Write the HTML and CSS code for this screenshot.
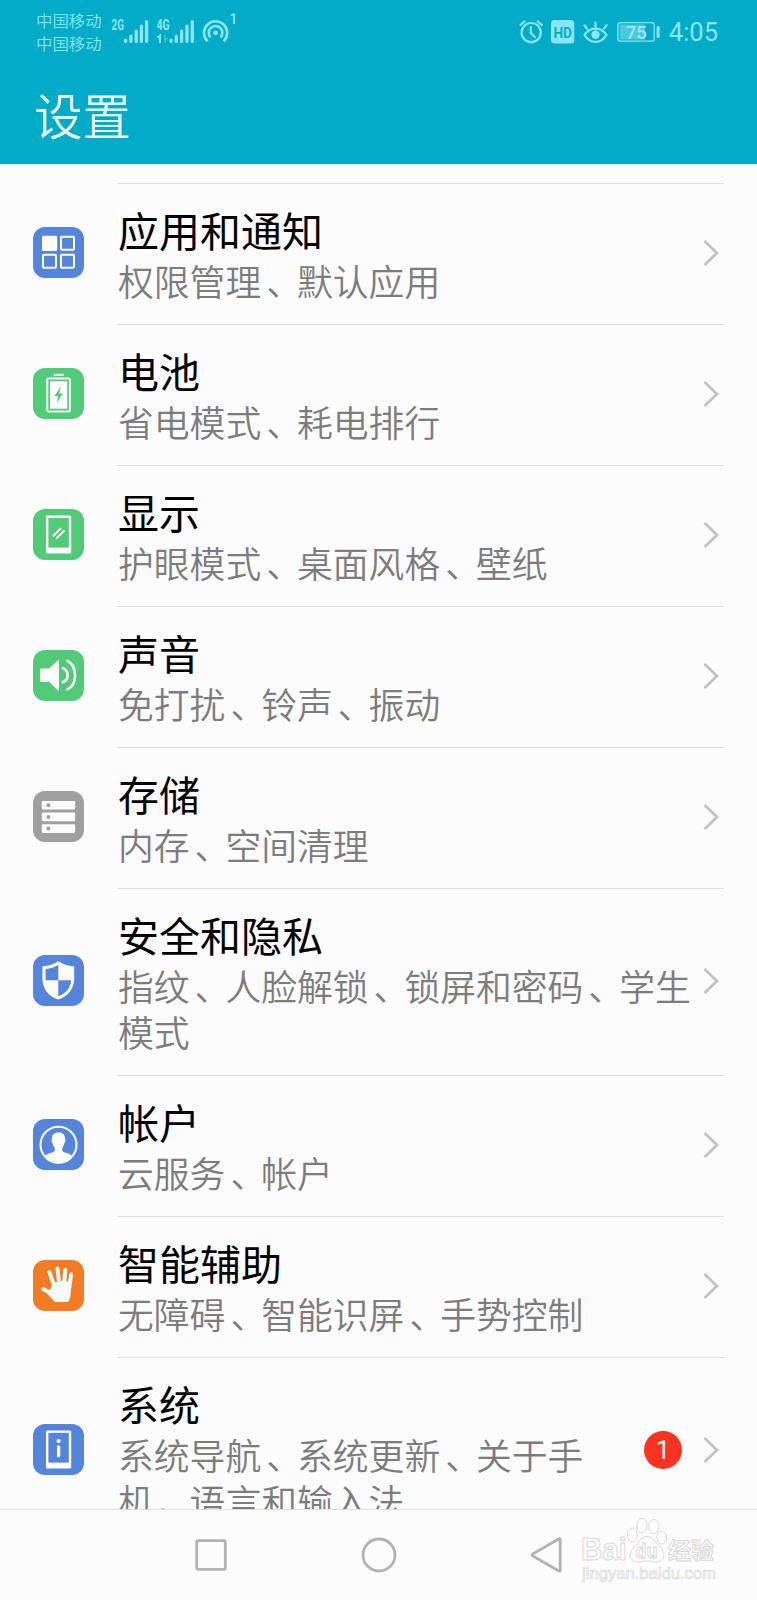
FILE: index.html
```
<!DOCTYPE html>
<html lang="zh-CN">
<head>
    <meta charset="UTF-8">
    <meta name="viewport" content="width=device-width, initial-scale=1.0">
    <title>设置</title>
    <link rel="stylesheet" href="styles.css">
</head>
<body>
    <div class="phone">
        <header class="header">
            <!-- Status bar -->
            <div class="status-bar">
                <div class="carriers">
                    <span>中国移动</span>
                    <span>中国移动</span>
                </div>
                <svg class="signals" width="130" height="60" viewBox="110 0 130 60">
                    <g class="signal-label">
                        <text x="111.5" y="30" textLength="12.5" lengthAdjust="spacingAndGlyphs">2G</text>
                        <text x="156.5" y="30" textLength="13" lengthAdjust="spacingAndGlyphs">4G</text>
                    </g>
                    <g class="line" stroke-width="3.2" stroke-linecap="round">
                        <path d="M125.6 40v1.4M130.9 36v5.4M136.2 31v10.4M141.4 26v15.4M146.6 21.5v19.9"/>
                        <path d="M171 40v1.4M176.3 36v5.4M181.6 31v10.4M187 26v15.4M192.3 21.5v19.9"/>
                    </g>
                    <path class="line" stroke-width="2" d="M157.5 37.5l2.5-2v7.5"/>
                    <path class="line faint" stroke-width="1.5" d="M165 35v8M165 40l2.5-2"/>
                    <g class="line" stroke-width="2.6">
                        <path d="M207.6 41.3a11.6 11.6 0 1 1 16 0"/>
                        <path d="M210.6 37.4a6.8 6.8 0 1 1 10 0"/>
                    </g>
                    <circle class="fill" cx="215.6" cy="32.8" r="2.4"/>
                    <text class="hotspot-count" x="229.5" y="23.5">1</text>
                </svg>
                <div class="status-right">
                    <svg width="24" height="60" viewBox="519 0 24 60">
                        <g class="line" stroke-width="2.2" stroke-linecap="round">
                            <circle cx="531.2" cy="32.6" r="9.6"/>
                            <path d="M530.8 27v6l4 4M520.5 25l4-3.5M541.8 25l-4-3.5"/>
                        </g>
                    </svg>
                    <svg width="24" height="60" viewBox="551 0 24 60">
                        <rect class="fill" x="551" y="20" width="23.3" height="23.5" rx="3.5"/>
                        <text class="hd" x="553.4" y="37.6" textLength="18.5" lengthAdjust="spacingAndGlyphs">HD</text>
                    </svg>
                    <svg width="26" height="60" viewBox="583 0 26 60">
                        <g class="line" stroke-width="2.2" stroke-linecap="round">
                            <path d="M584.5 35C590 26.4 601 26.4 606.5 35C601 44.2 590 44.2 584.5 35z"/>
                            <path d="M595.5 27v-4.5M587 28.5l-2.6-3.2M604 28.5l2.6-3.2"/>
                        </g>
                        <circle class="fill" cx="595.5" cy="34.8" r="4.2"/>
                    </svg>
                    <svg width="43" height="60" viewBox="619 0 43 60">
                        <rect class="line" stroke-width="1.3" x="619.8" y="22.6" width="36.4" height="18.6" rx="2.5"/>
                        <rect class="level" x="621.5" y="24.5" width="25.5" height="15"/>
                        <rect class="fill" x="658.6" y="26" width="3" height="12" rx="1"/>
                        <text class="battery-text" x="638.2" y="38.6" text-anchor="middle">75</text>
                    </svg>
                    <span class="clock">4:05</span>
                </div>
            </div>
            <h1>设置</h1>
        </header>

        <main class="list">
            <div class="item">
                <svg class="icon blue" viewBox="0 0 51 51">
                    <rect class="w" x="9" y="8.8" width="15.2" height="15.2" rx="1.2"/>
                    <g class="ws">
                        <rect x="28" y="9.8" width="13" height="13" rx="0.8"/>
                        <rect x="10" y="27.8" width="13" height="13" rx="0.8"/>
                        <rect x="28" y="27.8" width="13" height="13" rx="0.8"/>
                    </g>
                </svg>
                <div class="body">
                    <div class="text">
                        <h2>应用和通知</h2>
                        <p>权限管理<i>、</i>默认应用</p>
                    </div>
                    <svg class="arrow" viewBox="0 0 16 28"><path d="M1.5 2L14 14L1.5 26"/></svg>
                </div>
            </div>

            <div class="item">
                <svg class="icon green" viewBox="0 0 51 51">
                    <rect class="w" x="20.7" y="5.8" width="10" height="2"/>
                    <rect class="ws" x="14.3" y="10.5" width="22.6" height="33" rx="1.2"/>
                    <rect class="w" x="17" y="13.3" width="17.2" height="27.4"/>
                    <path class="c" d="M27.6 18.5L21.5 28h3.8l-1.4 6.5L29.8 25.5h-3.6z"/>
                </svg>
                <div class="body">
                    <div class="text">
                        <h2>电池</h2>
                        <p>省电模式<i>、</i>耗电排行</p>
                    </div>
                    <svg class="arrow" viewBox="0 0 16 28"><path d="M1.5 2L14 14L1.5 26"/></svg>
                </div>
            </div>

            <div class="item">
                <svg class="icon green" viewBox="0 0 51 51">
                    <rect class="w" x="13" y="6.4" width="25.2" height="38.2" rx="1.4"/>
                    <rect class="c" x="15.4" y="8.9" width="20.4" height="29.7"/>
                    <path class="ws" d="M19.8 27.2L28.2 19.2M23.2 29.6L31.6 21.4"/>
                </svg>
                <div class="body">
                    <div class="text">
                        <h2>显示</h2>
                        <p>护眼模式<i>、</i>桌面风格<i>、</i>壁纸</p>
                    </div>
                    <svg class="arrow" viewBox="0 0 16 28"><path d="M1.5 2L14 14L1.5 26"/></svg>
                </div>
            </div>

            <div class="item">
                <svg class="icon green" viewBox="0 0 51 51">
                    <path class="w" d="M8 18.5h8L25 10.3q1-.5 1 .7v29q0 1.2-1 .6L16 31.8H8q-1 0-1-1v-11.3q0-1 1-1z"/>
                    <path class="ws thick" d="M29.8 18.3c6.4 2.2 6.4 11.6 0 13.8M34.4 10.8c10.2 5 10.2 23.8 0 28.6"/>
                </svg>
                <div class="body">
                    <div class="text">
                        <h2>声音</h2>
                        <p>免打扰<i>、</i>铃声<i>、</i>振动</p>
                    </div>
                    <svg class="arrow" viewBox="0 0 16 28"><path d="M1.5 2L14 14L1.5 26"/></svg>
                </div>
            </div>

            <div class="item">
                <svg class="icon gray" viewBox="0 0 51 51">
                    <rect class="w" x="8.8" y="10" width="33.4" height="8.4" rx="1.4"/>
                    <rect class="w" x="8.8" y="21.6" width="33.4" height="8.6" rx="1.4"/>
                    <rect class="w" x="8.8" y="33.3" width="33.4" height="8.6" rx="1.4"/>
                    <circle class="c" cx="15.4" cy="14.2" r="2"/>
                    <circle class="c" cx="15.4" cy="25.9" r="2"/>
                    <circle class="c" cx="15.4" cy="37.6" r="2"/>
                </svg>
                <div class="body">
                    <div class="text">
                        <h2>存储</h2>
                        <p>内存<i>、</i>空间清理</p>
                    </div>
                    <svg class="arrow" viewBox="0 0 16 28"><path d="M1.5 2L14 14L1.5 26"/></svg>
                </div>
            </div>

            <div class="item">
                <svg class="icon blue" viewBox="0 0 51 51">
                    <path class="w" d="M25.3 6.2C29.5 9.3 35 11 40.2 11.2Q41.2 11.3 41.2 12.3V24C41.2 33.5 34.5 42 25.3 44.6C16 42 9.4 33.5 9.4 24V12.3Q9.4 11.3 10.4 11.2C15.6 11 21 9.3 25.3 6.2z"/>
                    <path class="c" d="M25.3 9.8V25.2H12.6V14.2C17.3 13.7 21.6 12.2 25.3 9.8zM25.3 25.2H38.1C37.8 32.6 32.7 38.8 25.3 41.3z"/>
                </svg>
                <div class="body">
                    <div class="text">
                        <h2>安全和隐私</h2>
                        <p>指纹<i>、</i>人脸解锁<i>、</i>锁屏和密码<i>、</i>学生模式</p>
                    </div>
                    <svg class="arrow" viewBox="0 0 16 28"><path d="M1.5 2L14 14L1.5 26"/></svg>
                </div>
            </div>

            <div class="item">
                <svg class="icon blue" viewBox="0 0 51 51">
                    <circle class="ws" cx="25.5" cy="25.8" r="18"/>
                    <path class="w" d="M25.5 13.6C30 13.6 32.2 16 32 20C32.8 20.4 32.6 23.6 31.4 24C31 26.4 30 28 29.2 29V31.6C30 34 36.5 34 39.4 37.2C32.5 46.5 18.5 46.5 11.6 37.2C14.5 34 21 34 21.8 31.6V29C21 28 20 26.4 19.6 24C18.4 23.6 18.2 20.4 19 20C18.8 16 21 13.6 25.5 13.6z"/>
                </svg>
                <div class="body">
                    <div class="text">
                        <h2>帐户</h2>
                        <p>云服务<i>、</i>帐户</p>
                    </div>
                    <svg class="arrow" viewBox="0 0 16 28"><path d="M1.5 2L14 14L1.5 26"/></svg>
                </div>
            </div>

            <div class="item">
                <svg class="icon orange" viewBox="0 0 51 51">
                    <path class="w" d="M20.6 25L18 17.5L20 23L27 21H33L38 23V30C37.8 34 37.5 37.5 36 40.5Q35 42 33 42H23.5Q22 42 20.5 40.5L14 33.5Z"/>
                    <path class="finger" d="M16.4 12.2L21.6 27M24.5 8.6L26.3 25M32.3 10L31 25M38.1 14.4L36 30"/>
                    <path class="finger" d="M10.2 29.2C13.5 30.6 16.4 32.2 20 35"/>
                    <path class="w" d="M19 24L22 33L18 32z"/>
                </svg>
                <div class="body">
                    <div class="text">
                        <h2>智能辅助</h2>
                        <p>无障碍<i>、</i>智能识屏<i>、</i>手势控制</p>
                    </div>
                    <svg class="arrow" viewBox="0 0 16 28"><path d="M1.5 2L14 14L1.5 26"/></svg>
                </div>
            </div>

            <div class="item">
                <svg class="icon blue" viewBox="0 0 51 51">
                    <rect class="w" x="13" y="6.4" width="25.2" height="38.2" rx="1.4"/>
                    <rect class="c" x="15.4" y="8.9" width="20.4" height="29.7"/>
                    <circle class="w" cx="25.6" cy="17" r="2.1"/>
                    <rect class="w" x="24" y="21.6" width="3.2" height="11.6" rx="1"/>
                </svg>
                <div class="body">
                    <div class="text">
                        <h2>系统</h2>
                        <p>系统导航<i>、</i>系统更新<i>、</i>关于手机<i>、</i>语言和输入法</p>
                    </div>
                    <span class="badge">1</span>
                    <svg class="arrow" viewBox="0 0 16 28"><path d="M1.5 2L14 14L1.5 26"/></svg>
                </div>
            </div>
        </main>

        <!-- Navigation bar -->
        <nav class="nav-bar">
            <svg width="36" height="36" viewBox="0 0 36 36"><rect x="3.7" y="3.7" width="28.6" height="28.6" rx="1.5"/></svg>
            <svg width="36" height="36" viewBox="0 0 36 36"><circle cx="18" cy="18" r="16"/></svg>
            <svg width="36" height="36" viewBox="0 0 36 36"><path d="M31.2 2.4V33.4Q31.2 34.6 30 34L3.6 18.9Q2.6 18 3.6 17.1L30 1.8Q31.2 1.2 31.2 2.4z"/></svg>
        </nav>

        <svg class="watermark" viewBox="576 1514 146 74">
            <text class="wm-big" x="581" y="1560" textLength="46" lengthAdjust="spacingAndGlyphs">Bai</text>
            <g class="paw">
                <ellipse cx="632.3" cy="1535" rx="5" ry="7"/>
                <ellipse cx="642" cy="1525.5" rx="5.2" ry="7.3"/>
                <ellipse cx="653.8" cy="1526.5" rx="5.2" ry="7"/>
                <ellipse cx="661.8" cy="1537.5" rx="4.9" ry="6.6"/>
                <path d="M647 1536.5C654 1536.5 655 1543 660 1547C666 1552 665 1562 656 1562C652 1562 650 1561 647 1561C644 1561 642 1562 638 1562C629 1562 628 1552 634 1547C639 1543 640 1536.5 647 1536.5z"/>
            </g>
            <text class="wm-du" x="635.5" y="1558" textLength="22" lengthAdjust="spacingAndGlyphs">du</text>
            <text class="wm-cn" x="668" y="1559" textLength="46">经验</text>
            <text class="wm-url" x="582" y="1579" textLength="134" lengthAdjust="spacingAndGlyphs">jingyan.baidu.com</text>
        </svg>
    </div>
</body>
</html>
```
FILE: styles.css
```
* {
    margin: 0;
    padding: 0;
    box-sizing: border-box;
}

body {
    font-family: "Noto Sans CJK SC", sans-serif;
    background: #fcfcfc;
}

.phone {
    position: relative;
    width: 757px;
    height: 1600px;
    display: flex;
    flex-direction: column;
    overflow: hidden;
}

/* Header */
.header {
    height: 164px;
    flex: none;
    background: #02acc8;
    color: #e9fdff;
}

.header h1 {
    margin: 18px 0 0 34px;
    font-size: 48.5px;
    line-height: 64px;
    font-weight: 350;
}

.status-bar {
    display: flex;
    height: 64px;
    padding: 0 39px 0 36px;
    color: #8ce6f2;
}

.carriers {
    display: flex;
    flex-direction: column;
    width: 74px;
    padding-top: 9px;
    font-size: 16.4px;
    line-height: 23px;
    font-weight: 350;
}

.status-right {
    display: flex;
    gap: 8px;
    margin-left: auto;
}

.status-right svg {
    margin-left: -1px;
    margin-right: 1px;
}

.clock {
    font-family: Roboto, sans-serif;
    font-size: 25.5px;
    line-height: 65px;
}

.line {
    fill: none;
    stroke: #8ce6f2;
}

.faint {
    opacity: 0.4;
}

.fill {
    fill: #8ce6f2;
}

.level {
    fill: #4ac9dc;
}

.signal-label {
    font: 700 14px Roboto, sans-serif;
    fill: #8ce6f2;
}

.hotspot-count {
    font: 500 14px Roboto, sans-serif;
    fill: #8ce6f2;
}

.hd {
    font: 700 15.5px Roboto, sans-serif;
    fill: #02acc8;
}

.battery-text {
    font: 500 18.5px Roboto, sans-serif;
    fill: #9beaf4;
}

/* Settings list */
.list {
    flex: 1;
    min-height: 0;
    padding-top: 19px;
    overflow: hidden;
}

.item {
    display: flex;
    align-items: center;
    padding: 0 33px;
}

.icon {
    width: 51px;
    height: 51px;
    flex: none;
    margin: 0 33px 2px 0;
    border-radius: 12px;
    background: currentColor;
}

.blue { color: #5585db; }
.green { color: #51cb77; }
.gray { color: #9f9f9f; }
.orange { color: #f37b22; }

.w {
    fill: #fcfcfc;
}

.c {
    fill: currentColor;
}

.ws {
    fill: none;
    stroke: #fcfcfc;
    stroke-width: 2;
}

.ws.thick {
    stroke-width: 2.6;
    stroke-linecap: round;
}

.finger {
    fill: none;
    stroke: #fcfcfc;
    stroke-width: 4;
    stroke-linecap: round;
}

.body {
    flex: 1;
    display: flex;
    align-items: center;
    border-top: 1px solid #dedede;
    padding: 19px 5px 21px 1px;
}

.text {
    flex: 1;
}

.text h2 {
    font-size: 41px;
    line-height: 52px;
    font-weight: 400;
    color: #000;
    margin-bottom: 2px;
}

.text p {
    font-size: 35.8px;
    line-height: 46px;
    font-weight: 350;
    color: #7c7c7c;
}

/* enumeration comma sits closer to the middle of its cell */
.text i {
    position: relative;
    left: 5px;
    font-style: normal;
}

.arrow {
    width: 16px;
    height: 28px;
    flex: none;
    margin-left: 9px;
    fill: none;
    stroke: #c2c2c2;
    stroke-width: 2.8;
}

.badge {
    width: 38px;
    height: 38px;
    margin: 0 12px 0 28px;
    border-radius: 50%;
    background: #fb3320;
    color: #fff;
    font-family: Roboto, sans-serif;
    font-size: 25px;
    line-height: 39px;
    text-align: center;
}

/* Bottom navigation */
.nav-bar {
    height: 91px;
    flex: none;
    display: flex;
    justify-content: center;
    align-items: center;
    gap: 132px;
    border-top: 1px solid #dedede;
}

.nav-bar svg {
    fill: none;
    stroke: #b2b2b2;
    stroke-width: 2.8;
}

.watermark {
    position: absolute;
    left: 576px;
    top: 1514px;
    width: 146px;
    height: 74px;
    fill: #fcfcfc;
    stroke: #d9d9d9;
    stroke-width: 1;
}

.wm-big {
    font: 700 31px "Liberation Sans", sans-serif;
}

.wm-du {
    font: 700 21px "Liberation Sans", sans-serif;
}

.wm-cn {
    font: 700 23px "Noto Sans CJK SC", sans-serif;
}

.wm-url {
    font: 400 16px "Liberation Sans", sans-serif;
    stroke-width: 0.7;
}
```
